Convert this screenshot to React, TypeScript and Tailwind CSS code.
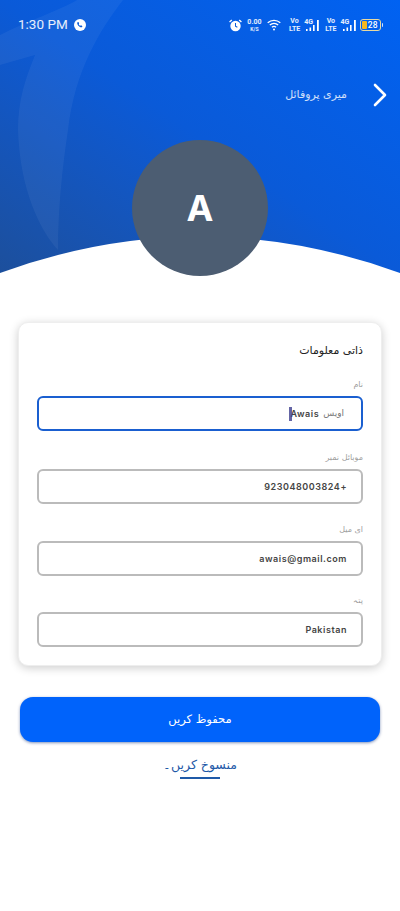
const urdu = "font-['DejaVu_Sans','Noto_Sans',sans-serif]";

const VoLte = () => (
  <div className="flex flex-col items-center font-['Roboto',sans-serif] text-[7px] font-bold leading-[8px] text-white/90">
    <span>Vo</span>
    <span>LTE</span>
  </div>
);

const Signal = () => (
  <div className="relative h-[14px] w-[16px]">
    <span className="absolute left-0 top-0 font-['Roboto',sans-serif] text-[7px] font-bold leading-[8px] text-white/90">4G</span>
    <svg viewBox="0 0 16 14" className="absolute inset-0 h-[14px] w-[16px]" fill="white">
      <rect x="2" y="11" width="1.6" height="2" />
      <rect x="5.5" y="9.5" width="1.6" height="3.5" />
      <rect x="9" y="7" width="1.6" height="6" />
      <rect x="13" y="2" width="1.8" height="11" />
    </svg>
  </div>
);

const StatusBar = () => (
  <div className="flex h-[50px] items-center justify-between pl-[18px] pr-[17px] text-white">
    <div className="flex items-center gap-[6px]">
      <span className="font-['Roboto',sans-serif] text-[13.5px] leading-none text-white/90">1:30 PM</span>
      <svg viewBox="0 0 12 12" className="h-[12px] w-[12px]">
        <circle cx="6" cy="6" r="6" fill="white" />
        <path d="M3.4 3.4c.8-.7 1.4 0 1.7.8.2.5-.4.8-.3 1.2.3.6.7 1 1.3 1.3.4.1.7-.5 1.2-.3.8.3 1.5.9.8 1.7-1.4 1.2-5.9-2.6-4.7-4.7z" fill="#0b5cd8" />
      </svg>
    </div>
    <div className="flex items-center">
      <svg viewBox="0 0 14 14" className="h-[13px] w-[13px]" fill="none">
        <circle cx="7" cy="7.5" r="5.6" fill="white" />
        <path d="M7 4.4v3.3l2 1.2" stroke="#0b5cd8" strokeWidth="1.1" />
        <path d="M.6 3.2 3 1M13.4 3.2 11 1" stroke="white" strokeWidth="1.4" />
      </svg>
      <div className="ml-[5px] flex w-[15px] flex-col items-center font-['Roboto',sans-serif] font-bold text-white/90">
        <span className="text-[7px] leading-[8px]">0.00</span>
        <span className="text-[5px] leading-[6px]">K/S</span>
      </div>
      <svg viewBox="0 0 14 12" className="ml-[5px] h-[12px] w-[14px]" fill="none" stroke="white" strokeWidth="1.3">
        <path d="M.7 3.8C4.3.6 9.7.6 13.3 3.8" />
        <path d="M2.8 6c2.4-2 6-2 8.4 0" />
        <path d="M4.9 8.2c1.3-1 2.9-1 4.2 0" />
        <circle cx="7" cy="10.4" r="1" fill="white" stroke="none" />
      </svg>
      <div className="ml-[8px]"><VoLte /></div>
      <div className="ml-[4px]"><Signal /></div>
      <div className="ml-[5px]"><VoLte /></div>
      <div className="ml-[4px]"><Signal /></div>
      <div className="relative ml-[3px] flex h-[12px] w-[21px] items-center justify-end rounded-[3px] border border-[#e8d9a0] pr-[2px]">
        <div className="absolute bottom-[1px] left-[1px] top-[1px] w-[5px] rounded-[1px] bg-[#f5b81f]" />
        <span className="relative font-['Roboto',sans-serif] text-[8.5px] font-medium leading-none text-white">28</span>
      </div>
      <div className="ml-[1px] h-[4px] w-[1.5px] rounded-r bg-white/80" />
    </div>
  </div>
);

const Header = () => (
  <div className="relative h-[273px] bg-linear-to-bl from-[#0062f2] via-[#0a5ad8] to-[#1c4f9c]">
    <svg viewBox="0 0 400 273" className="absolute inset-0 h-full w-full" fill="white" fillOpacity="0.05">
      <path d="M123 0C100 30 75 70 68 130c-6 40-10 80-10 120-18-20-38-60-40-120 0-30 7-50 17-75L0 65V35C30 20 60 10 77 0z" />
    </svg>
    <svg viewBox="0 0 400 37" className="absolute bottom-0 left-0 h-[37px] w-full" fill="white">
      <path d="M0 37Q200-36 400 37z" />
    </svg>
    <div className="relative">
      <StatusBar />
      <div className="mt-[33px] flex h-[24px] items-center justify-end pr-[13px]">
        <span dir="rtl" className={`${urdu} text-[11px] text-white/80`}>میری پروفائل</span>
        <svg viewBox="0 0 14 24" className="ml-[26px] h-[24px] w-[14px]" fill="none" stroke="white" strokeWidth="2.6" strokeLinecap="round" strokeLinejoin="round">
          <path d="M2 2l10 10L2 22" />
        </svg>
      </div>
      <div className="mx-auto mt-[33px] flex h-[136px] w-[136px] items-center justify-center rounded-full bg-[#4c5d72]">
        <span className="font-['Inter',sans-serif] text-[36px] font-bold leading-none text-white">A</span>
      </div>
    </div>
  </div>
);

const Field = ({ label, focused, children }: { label: string; focused?: boolean; children: React.ReactNode }) => (
  <div>
    <div dir="rtl" className={`${urdu} flex h-[19px] items-center text-[8px] text-[#a0a0a0]`}>{label}</div>
    <div
      className={`mt-[2px] flex h-[35px] items-center justify-end rounded-[6px] border-2 bg-white pr-[14px] ${
        focused ? "border-[#1a5fd0]" : "border-[#bbbbbb]"
      }`}
    >
      {children}
    </div>
  </div>
);

const Value = ({ children }: { children: React.ReactNode }) => (
  <span className="font-['Inter',sans-serif] text-[9px] font-semibold tracking-[0.55px] text-[#444]">{children}</span>
);

export default function App() {
  return (
    <div className="min-h-[911px] w-full overflow-hidden bg-white">
      <Header />
      <div className="ml-[18px] mr-[18px] mt-[49px] h-[344px] rounded-[10px] border border-[#eee] bg-white px-[18px] pt-[16px] shadow-[0_2px_10px_rgba(0,0,0,0.2)]">
        <div dir="rtl" className={`${urdu} flex h-[24px] items-center text-[11px] text-[#222]`}>ذاتی معلومات</div>
        <div className="mt-[12px]">
          <Field label="نام" focused>
            <span className="z-10 mr-[-2px] h-[14px] w-[3px] bg-[#3d3f8f]/80" />
            <Value>Awais</Value>
            <span className={`${urdu} ml-[4px] mr-[3px] text-[9px] text-[#777]`}>اویس</span>
          </Field>
          <div className="mt-[17px]">
            <Field label="موبائل نمبر"><Value>923048003824+</Value></Field>
          </div>
          <div className="mt-[16px]">
            <Field label="ای میل"><Value>awais@gmail.com</Value></Field>
          </div>
          <div className="mt-[15px]">
            <Field label="پتہ"><Value>Pakistan</Value></Field>
          </div>
        </div>
      </div>
      <button className="mx-[20px] mt-[31px] flex h-[45px] w-[360px] items-center justify-center rounded-[13px] bg-[#0063fb] shadow-[0_1px_3px_rgba(0,40,120,0.5)]">
        <span dir="rtl" className={`${urdu} text-[11.5px] text-white`}>محفوظ کریں</span>
      </button>
      <div className="mt-[13px] flex flex-col items-center">
        <span dir="rtl" className={`${urdu} text-[12.5px] leading-[20px] text-[#1f5aa8]`}>منسوخ کریں۔</span>
        <div className="mt-[2px] h-[1.5px] w-[40px] bg-[#1f5aa8]" />
      </div>
    </div>
  );
}
